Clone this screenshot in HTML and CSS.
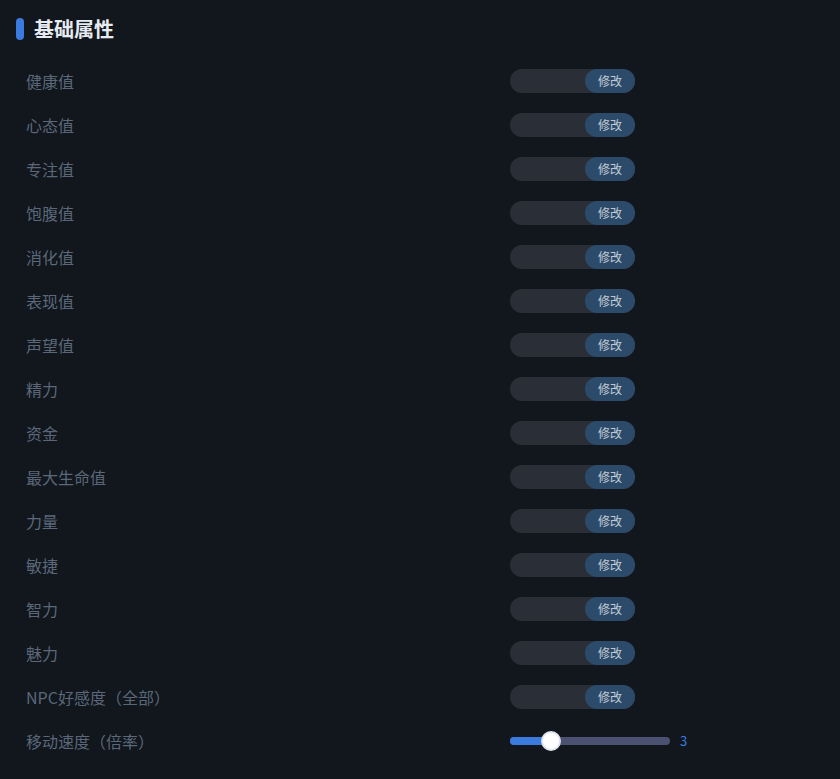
FILE: index.html
```html
<!DOCTYPE html>
<html lang="zh">
<head>
<meta charset="utf-8">
<link rel="stylesheet" href="styles.css">
</head>
<body>
<div class="panel">
  <div class="title"><span class="accent"></span><span class="title-text">基础属性</span></div>
  <div class="rows">
    <div class="row"><span class="label">健康值</span><div class="toggle"><span class="btn">修改</span></div></div>
    <div class="row"><span class="label">心态值</span><div class="toggle"><span class="btn">修改</span></div></div>
    <div class="row"><span class="label">专注值</span><div class="toggle"><span class="btn">修改</span></div></div>
    <div class="row"><span class="label">饱腹值</span><div class="toggle"><span class="btn">修改</span></div></div>
    <div class="row"><span class="label">消化值</span><div class="toggle"><span class="btn">修改</span></div></div>
    <div class="row"><span class="label">表现值</span><div class="toggle"><span class="btn">修改</span></div></div>
    <div class="row"><span class="label">声望值</span><div class="toggle"><span class="btn">修改</span></div></div>
    <div class="row"><span class="label">精力</span><div class="toggle"><span class="btn">修改</span></div></div>
    <div class="row"><span class="label">资金</span><div class="toggle"><span class="btn">修改</span></div></div>
    <div class="row"><span class="label">最大生命值</span><div class="toggle"><span class="btn">修改</span></div></div>
    <div class="row"><span class="label">力量</span><div class="toggle"><span class="btn">修改</span></div></div>
    <div class="row"><span class="label">敏捷</span><div class="toggle"><span class="btn">修改</span></div></div>
    <div class="row"><span class="label">智力</span><div class="toggle"><span class="btn">修改</span></div></div>
    <div class="row"><span class="label">魅力</span><div class="toggle"><span class="btn">修改</span></div></div>
    <div class="row"><span class="label">NPC好感度（全部）</span><div class="toggle"><span class="btn">修改</span></div></div>
    <div class="row"><span class="label">移动速度（倍率）</span>
      <div class="slider">
        <div class="track"><div class="fill" style="width:41px"></div><div class="thumb" style="left:41px"></div></div>
        <span class="value">3</span>
      </div>
    </div>
  </div>
</div>
</body>
</html>
```

FILE: styles.css
```css
html, body {
  margin: 0;
  padding: 0;
  background: #12161d;
}
body {
  width: 840px;
  height: 779px;
  overflow: hidden;
  font-family: "Noto Sans CJK SC", "Noto Sans", sans-serif;
}
.panel {
  padding: 18px 16px 0 16px;
}
.title {
  display: flex;
  align-items: center;
  height: 22px;
  gap: 10px;
}
.accent {
  width: 8px;
  height: 22px;
  border-radius: 4px;
  background: #3b7be0;
}
.title-text {
  font-size: 20px;
  font-weight: 700;
  color: #e6ebf1;
  line-height: 22px;
}
.rows {
  margin-top: 19px;
  padding-left: 10px;
}
.row {
  display: grid;
  grid-template-columns: 484px auto;
  align-items: center;
  height: 44px;
}
.label {
  font-size: 16px;
  color: #5a6879;
  line-height: 20px;
}
.toggle {
  width: 125px;
  height: 24px;
  border-radius: 12px;
  background: #2a2e36;
  display: flex;
  justify-content: flex-end;
}
.btn {
  width: 50px;
  height: 24px;
  border-radius: 12px;
  background: #2c4b6a;
  color: #c3ccd6;
  font-size: 12px;
  line-height: 24px;
  text-align: center;
}
.slider {
  display: flex;
  align-items: center;
  gap: 10px;
}
.track {
  position: relative;
  width: 160px;
  height: 8px;
  border-radius: 4px;
  background: #4b5170;
}
.fill {
  height: 8px;
  border-radius: 4px;
  background: #3b7be0;
}
.thumb {
  position: absolute;
  top: 50%;
  width: 16px;
  height: 16px;
  margin: -10px 0 0 -10px;
  border-radius: 50%;
  background: #ffffff;
  border: 2px solid #dfe6ee;
}
.value {
  font-size: 13px;
  color: #3b7be0;
  line-height: 16px;
}
```
